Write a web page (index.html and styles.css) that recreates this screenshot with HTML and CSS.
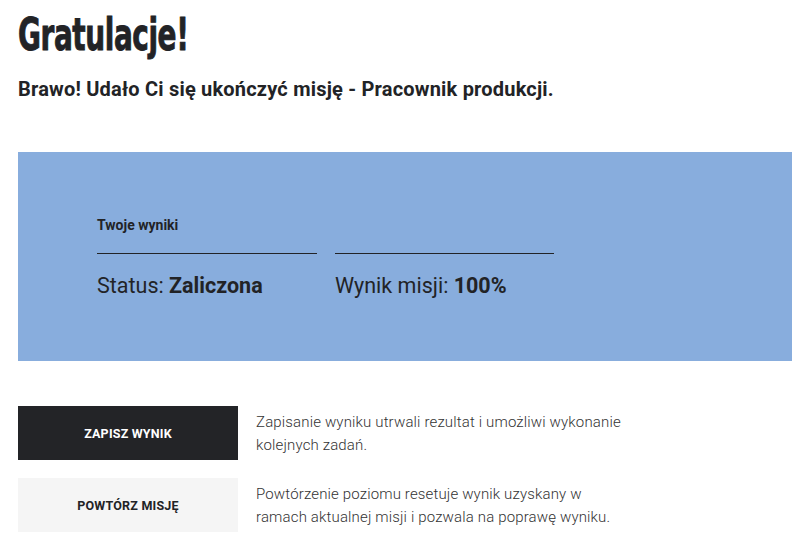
FILE: index.html
```html
<!DOCTYPE html>
<html lang="pl">
<head>
<meta charset="utf-8">
<link rel="stylesheet" href="styles.css">
</head>
<body>
<main class="page">
  <h1 class="title"><span class="title-text">Gratulacje!</span></h1>
  <p class="lead">Brawo! Udało Ci się ukończyć misję - Pracownik produkcji.</p>

  <section class="results">
    <div class="results-grid">
      <div class="col">
        <div class="label">Twoje wyniki</div>
        <div class="value">Status: <strong>Zaliczona</strong></div>
      </div>
      <div class="col">
        <div class="label"></div>
        <div class="value">Wynik misji: <strong>100%</strong></div>
      </div>
    </div>
  </section>

  <div class="actions">
    <div class="action">
      <button class="btn btn-dark">ZAPISZ WYNIK</button>
      <p class="desc">Zapisanie wyniku utrwali rezultat i umożliwi wykonanie kolejnych zadań.</p>
    </div>
    <div class="action">
      <button class="btn btn-light">POWTÓRZ MISJĘ</button>
      <p class="desc">Powtórzenie poziomu resetuje wynik uzyskany w ramach aktualnej misji i pozwala na poprawę wyniku.</p>
    </div>
  </div>
</main>
</body>
</html>
```

FILE: styles.css
```css
* { box-sizing: border-box; }
html, body { margin: 0; padding: 0; background: #fff; }
body {
  font-family: Roboto, "Liberation Sans", sans-serif;
  color: #222326;
}
.page {
  padding: 0 4px 0 18px;
}
.title {
  margin: 0;
  padding-top: 8px;
  height: 62px;
  font-family: "DejaVu Sans Condensed", "Liberation Sans", sans-serif;
  font-weight: 700;
  font-size: 45px;
  line-height: 54px;
  color: #222326;
}
.title-text {
  display: inline-block;
  transform: scaleX(0.69);
  transform-origin: left center;
  letter-spacing: -0.6px;
  -webkit-text-stroke: 0.9px #222326;
}
.lead {
  margin: 15px 0 0;
  font-size: 20px;
  font-weight: 700;
  line-height: 24px;
  letter-spacing: 0.2px;
}
.results {
  margin-top: 51px;
  height: 209px;
  background: #88addd;
  padding: 63px 0 0 79px;
}
.results-grid {
  display: grid;
  grid-template-columns: 220px 219px;
  column-gap: 18px;
}
.label {
  font-size: 14px;
  font-weight: 700;
  line-height: 20px;
  height: 39px;
  border-bottom: 1px solid #222326;
}
.value {
  margin-top: 18px;
  font-size: 21.5px;
  line-height: 28px;
  color: #222326;
}
.value strong { font-weight: 700; }
.actions {
  margin-top: 45px;
  display: flex;
  flex-direction: column;
  gap: 18px;
}
.action {
  display: flex;
  align-items: flex-start;
  gap: 18px;
}
.btn {
  flex: 0 0 220px;
  height: 54px;
  border: 0;
  padding: 0;
  font-family: Roboto, "Liberation Sans", sans-serif;
  font-size: 12.5px;
  font-weight: 700;
  letter-spacing: 0.2px;
}
.btn-dark { background: #232427; color: #fff; }
.btn-light { background: #f5f5f5; color: #222326; }
.desc {
  margin: 0;
  padding-top: 5px;
  width: 370px;
  font-size: 15px;
  font-weight: 300;
  line-height: 23px;
  color: #333;
  letter-spacing: 0.15px;
}
```
